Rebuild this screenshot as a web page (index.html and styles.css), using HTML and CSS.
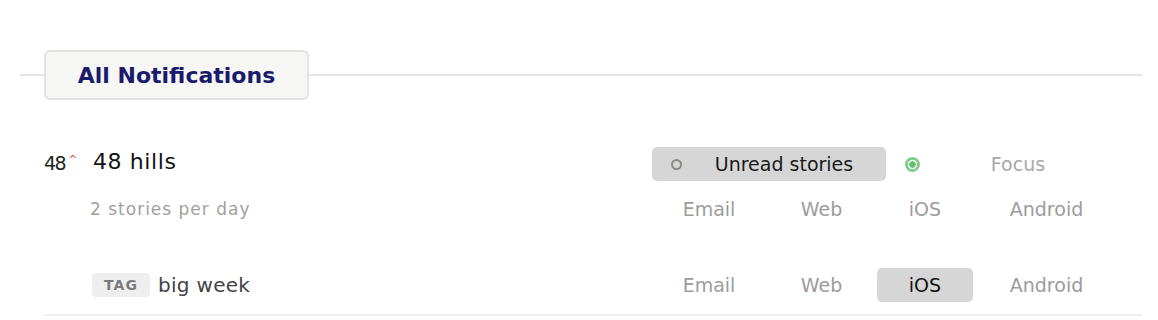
FILE: index.html
```html
<!DOCTYPE html>
<html>
<head>
<meta charset="utf-8">
<link rel="stylesheet" href="styles.css">
</head>
<body>
<div class="page">
  <div class="header">
    <div class="rule-left"></div>
    <div class="tab">All Notifications</div>
    <div class="rule"></div>
  </div>

  <div class="feed">
    <div class="cell-left title-line">
      <span class="favicon">48<span class="caret">^</span></span>
      <span class="title">48 hills</span>
    </div>
    <div class="segments">
      <div class="seg seg-on">
        <span class="radio radio-gray"></span>
        <span class="seg-label">Unread stories</span>
      </div>
      <div class="seg">
        <span class="radio radio-green"></span>
        <span class="seg-label muted">Focus</span>
      </div>
    </div>

    <div class="cell-left sub">2 stories per day</div>
    <div class="platforms row-b">
      <span class="plat">Email</span>
      <span class="plat">Web</span>
      <span class="plat">iOS</span>
      <span class="plat">Android</span>
    </div>

    <div class="cell-left tag-line">
      <span class="tag">TAG</span>
      <span class="tag-name">big week</span>
    </div>
    <div class="platforms row-c">
      <span class="plat">Email</span>
      <span class="plat">Web</span>
      <span class="plat plat-on">iOS</span>
      <span class="plat">Android</span>
    </div>
  </div>
</div>
</body>
</html>
```

FILE: styles.css
```css
html, body {
  margin: 0;
  padding: 0;
  background: #ffffff;
}

body {
  font-family: "DejaVu Sans", "Liberation Sans", sans-serif;
  color: #111;
}

.page {
  padding: 50px 16px 0 20px;
}

.header {
  display: flex;
  align-items: center;
  height: 50px;
}

.rule-left {
  width: 24px;
  height: 2px;
  background: #e4e4e4;
}

.rule {
  flex: 1;
  height: 2px;
  background: #e4e4e4;
}

.tab {
  box-sizing: border-box;
  height: 50px;
  width: 265px;
  display: flex;
  align-items: center;
  justify-content: center;
  background: #f6f6f5;
  border: 2px solid #e3e3e3;
  border-radius: 6px;
  font-weight: bold;
  font-size: 22px;
  color: #1b1a6b;
  padding-top: 1px;
}

.feed {
  margin: 47px 0 0 24px;
  display: grid;
  grid-template-columns: 1fr 468px;
  column-gap: 0;
  padding-right: 22px;
  padding-bottom: 12px;
  border-bottom: 2px solid #f0f0f0;
}

.cell-left {
  display: flex;
  align-items: center;
}

.title-line {
  height: 34px;
  margin-top: -3px;
}

.favicon {
  width: 49px;
  font-size: 19px;
  color: #222;
  letter-spacing: -1.5px;
  position: relative;
  top: 2px;
}

.caret {
  color: #e0533f;
  font-size: 11px;
  vertical-align: 7px;
  margin-left: 3px;
}

.title {
  font-size: 22px;
  letter-spacing: 0.6px;
  color: #111;
}

.segments {
  display: flex;
  height: 34px;
}

.seg {
  width: 234px;
  display: flex;
  align-items: center;
  padding-left: 19px;
  box-sizing: border-box;
  border-radius: 5px;
}

.seg-on {
  background: #d6d6d6;
}

.radio {
  box-sizing: border-box;
  width: 11px;
  height: 11px;
  border-radius: 50%;
  flex: none;
}

.radio-gray {
  border: 2px solid #8a8a84;
}

.radio-green {
  width: 15px;
  height: 15px;
  background: radial-gradient(circle, #62c26b 0 3px, #ffffff 3.5px 4.5px, #80cf88 5px);
}

.seg-label {
  flex: 1;
  text-align: center;
  font-size: 19px;
  color: #1a1a1a;
}

.seg-label.muted {
  color: #a8a8a8;
  padding-right: 4px;
}

.sub {
  padding-left: 46px;
  font-size: 17px;
  letter-spacing: 1px;
  color: #a0a0a0;
  height: 34px;
  margin-top: 11px;
}

.platforms {
  display: grid;
  grid-template-columns: 114px 111px 96px 147px;
  height: 34px;
}

.row-b {
  margin-top: 11px;
}

.row-c {
  margin-top: 42px;
}

.plat {
  display: flex;
  align-items: center;
  justify-content: center;
  font-size: 19px;
  color: #9c9c9c;
  border-radius: 5px;
}

.plat-on {
  background: #d6d6d6;
  color: #111;
}

.tag-line {
  margin-top: 42px;
  height: 34px;
  padding-left: 48px;
}

.tag {
  box-sizing: border-box;
  height: 24px;
  width: 58px;
  display: flex;
  align-items: center;
  justify-content: center;
  background: #eeeeee;
  border-radius: 4px;
  font-size: 14px;
  font-weight: bold;
  letter-spacing: 1px;
  color: #7a7a7a;
}

.tag-name {
  margin-left: 8px;
  font-size: 20px;
  letter-spacing: 0.3px;
  color: #444;
}
```
